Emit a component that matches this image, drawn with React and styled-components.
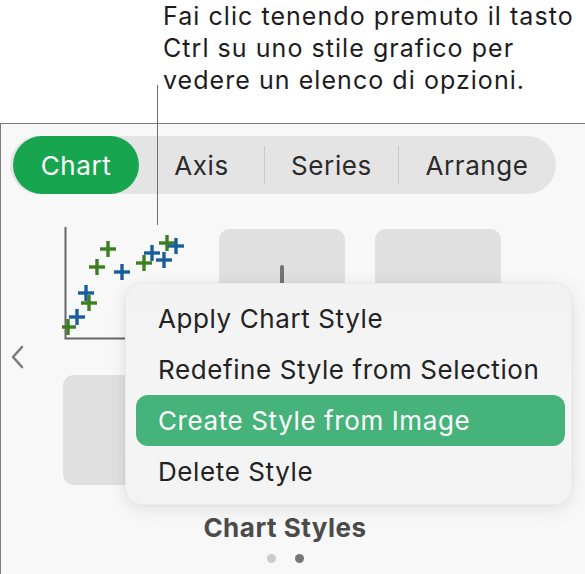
import React from "react";
import styled, { createGlobalStyle } from "styled-components";

const Global = createGlobalStyle`
  html, body {
    margin: 0;
    padding: 0;
    background: #ffffff;
  }
  body {
    font-family: "Inter", "Noto Sans", sans-serif;
    -webkit-font-smoothing: antialiased;
  }
`;

const Page = styled.div`
  position: relative;
  width: 585px;
  height: 574px;
  overflow: hidden;
  background: #ffffff;
`;

const Callout = styled.div`
  margin-left: 163px;
  height: 123px;
  font-size: 25px;
  line-height: 32px;
  color: #1d1d1f;
  letter-spacing: 1.05px;
  white-space: nowrap;
`;

const Leader = styled.div`
  position: absolute;
  left: 157px;
  top: 85px;
  width: 1px;
  height: 140px;
  background: #6f6f6f;
  z-index: 3;
`;

const Panel = styled.div`
  position: relative;
  width: 575px;
  height: 449px;
  border: 1px solid #7c7c7c;
  background: #f8f8f8;
  padding: 12px 0 0 9px;
  box-sizing: content-box;
`;

const SegBar = styled.div`
  display: flex;
  align-items: center;
  width: 546px;
  height: 58px;
  border-radius: 29px;
  background: #e4e4e4;
  box-sizing: border-box;
  padding-left: 3px;
`;

const Tab = styled.div`
  display: flex;
  align-items: center;
  justify-content: center;
  width: ${(p) => p.$w}px;
  height: 58px;
  border-radius: 29px;
  font-size: 26px;
  letter-spacing: 0.6px;
  color: ${(p) => (p.$active ? "#ffffff" : "#2a2a2a")};
  background: ${(p) => (p.$active ? "#17a550" : "transparent")};
`;

const Sep = styled.div`
  width: 1px;
  height: 38px;
  background: #c9c9c9;
`;

const Gallery = styled.div`
  display: flex;
  align-items: center;
  margin-top: 35px;
`;

const Chevron = styled.div`
  width: 52px;
  display: flex;
  align-items: center;
  padding-left: 1px;
`;

const Grid = styled.div`
  display: grid;
  grid-template-columns: repeat(3, 126px);
  column-gap: 30px;
  row-gap: 36px;
`;

const Thumb = styled.div`
  position: relative;
  width: 126px;
  height: 110px;
  border-radius: 11px;
  background: ${(p) => (p.$blank ? "transparent" : "#e0e0e0")};
  display: flex;
  justify-content: center;
`;

const Bar = styled.div`
  margin-top: 36px;
  width: 4px;
  height: 40px;
  border-radius: 2px;
  background: #747474;
`;

const Footer = styled.div`
  display: flex;
  flex-direction: column;
  align-items: center;
  margin-top: 28px;
  width: 550px;
`;

const Title = styled.div`
  font-size: 26px;
  font-weight: 700;
  letter-spacing: 0.5px;
  color: #4b4b4b;
  line-height: 30px;
`;

const Dots = styled.div`
  display: flex;
  gap: 19px;
  margin-top: 11px;
`;

const Dot = styled.div`
  width: 9px;
  height: 9px;
  border-radius: 50%;
  background: ${(p) => (p.$on ? "#777777" : "#cbcbcb")};
`;

const Menu = styled.div`
  position: absolute;
  left: 125px;
  top: 283px;
  width: 447px;
  box-sizing: border-box;
  padding: 9px 6px 7px 10px;
  border-radius: 18px;
  background: linear-gradient(180deg, #f2f2f2 0%, #f5f5f5 60%, #f3f3f3 100%);
  border: 1px solid #ececec;
  box-shadow: 0 4px 18px rgba(0, 0, 0, 0.1), 0 0 2px rgba(0, 0, 0, 0.08);
  z-index: 4;
`;

const Item = styled.div`
  height: 51px;
  display: flex;
  align-items: center;
  padding-left: 22px;
  border-radius: 12px;
  font-size: 26px;
  letter-spacing: 0.6px;
  color: ${(p) => (p.$hi ? "#ffffff" : "#222222")};
  background: ${(p) => (p.$hi ? "#46b47a" : "transparent")};
`;

const Plus = ({ x, y, c }) => (
  <g stroke={c} strokeWidth="3.4">
    <line x1={x - 8} y1={y} x2={x + 8} y2={y} />
    <line x1={x} y1={y - 8} x2={x} y2={y + 8} />
  </g>
);

const G = "#3c7f20";
const B = "#1b5d9c";

const points = [
  [109, 249, G],
  [98, 267, G],
  [123, 272, B],
  [145, 263, G],
  [153, 253, B],
  [165, 260, B],
  [168, 243, G],
  [177, 246, B],
  [87, 293, B],
  [90, 303, G],
  [78, 317, B],
  [69, 327, G],
];

const Scatter = () => (
  <svg width="140" height="114" viewBox="63 227 140 114" style={{ position: "absolute", left: -1, top: -2 }}>
    <polyline points="66.5,227 66.5,338.5 160,338.5" fill="none" stroke="#666" strokeWidth="2" />
    {points.map(([x, y, c], i) => (
      <Plus key={i} x={x} y={y} c={c} />
    ))}
  </svg>
);

const ChevronIcon = () => (
  <svg width="14" height="24" viewBox="0 0 14 24">
    <polyline points="11,2 2,12 11,22" fill="none" stroke="#7d7d7d" strokeWidth="2.6" strokeLinecap="round" strokeLinejoin="round" />
  </svg>
);

export default function App() {
  return (
    <Page>
      <Global />
      <Callout>
        Fai clic tenendo premuto il tasto
        <br />
        Ctrl su uno stile grafico per
        <br />
        vedere un elenco di opzioni.
      </Callout>
      <Leader />
      <Panel>
        <SegBar>
          <Tab $active $w={126}>Chart</Tab>
          <Tab $w={125}>Axis</Tab>
          <Sep />
          <Tab $w={133}>Series</Tab>
          <Sep />
          <Tab $w={156}>Arrange</Tab>
        </SegBar>
        <Gallery>
          <Chevron>
            <ChevronIcon />
          </Chevron>
          <Grid>
            <Thumb $blank>
              <Scatter />
            </Thumb>
            <Thumb>
              <Bar />
            </Thumb>
            <Thumb />
            <Thumb />
            <Thumb />
            <Thumb />
          </Grid>
        </Gallery>
        <Footer>
          <Title>Chart Styles</Title>
          <Dots>
            <Dot />
            <Dot $on />
          </Dots>
        </Footer>
      </Panel>
      <Menu>
        <Item>Apply Chart Style</Item>
        <Item>Redefine Style from Selection</Item>
        <Item $hi>Create Style from Image</Item>
        <Item>Delete Style</Item>
      </Menu>
    </Page>
  );
}
